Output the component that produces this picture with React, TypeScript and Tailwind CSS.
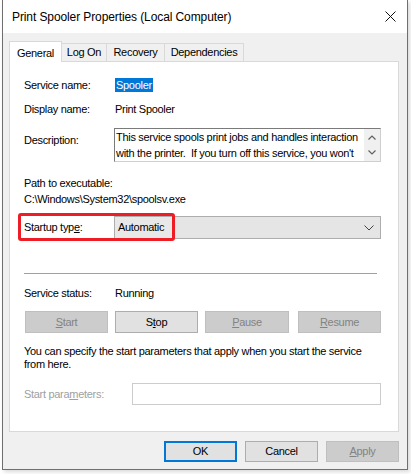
import React from "react";

const font = { fontFamily: '"Liberation Sans", Arial, sans-serif' };

function Btn({
  children,
  disabled,
  w,
  className = "",
}: {
  children: React.ReactNode;
  disabled?: boolean;
  w: string;
  className?: string;
}) {
  return (
    <div
      className={
        "flex h-[22px] items-center justify-center border text-[11px] " +
        w +
        " " +
        (disabled
          ? "border-[#bfbfbf] bg-[#cccccc] text-[#838383]"
          : "border-[#adadad] bg-[#e1e1e1] text-black") +
        " " +
        className
      }
    >
      {children}
    </div>
  );
}

export default function App() {
  return (
    <div className="relative h-[474px] w-[411px] bg-white pl-[2px] tracking-[-0.3px]" style={font}>
      <div className="flex h-[470px] w-[406px] flex-col border-x border-b border-[#6f6f6f] bg-[#f0f0f0] shadow-[2px_2px_4px_rgba(0,0,0,0.15)]">
        {/* Title bar */}
        <div className="flex h-[33px] shrink-0 items-center justify-between bg-white pl-[9px] pr-[10px]">
          <span className="text-[12px] tracking-[-0.1px] text-black">Print Spooler Properties (Local Computer)</span>
          <svg width="11" height="11" viewBox="0 0 11 11" className="mr-[1px]">
            <path d="M0.5 0.5 L10.5 10.5 M10.5 0.5 L0.5 10.5" stroke="#111" strokeWidth="1" fill="none" />
          </svg>
        </div>

        {/* Body */}
        <div className="flex flex-col pl-[6px]">
          {/* Tabs */}
          <div className="mt-[8px] flex h-[20px] items-end text-[11px]">
            <div className="relative z-10 -mb-px flex h-[21px] w-[53px] items-start justify-center border-x border-t border-[#d9d9d9] bg-white pt-[3px] text-black">
              General
            </div>
            <div className="flex h-[18px] w-[45px] items-center justify-center border-t border-r border-[#d9d9d9] text-black">
              Log On
            </div>
            <div className="flex h-[18px] w-[58px] items-center justify-center border-t border-r border-[#d9d9d9] text-black">
              Recovery
            </div>
            <div className="flex h-[18px] w-[79px] items-center justify-center border-t border-r border-[#d9d9d9] text-black">
              Dependencies
            </div>
          </div>

          {/* Panel */}
          <div className="flex h-[371px] w-[390px] flex-col border border-[#d9d9d9] bg-white pl-[14px] text-[11px] text-black">
            <div className="mt-[15px] flex h-[16px] items-center">
              <span className="w-[91px]">Service name:</span>
              <span className="bg-[#0078d7] px-[1px] leading-[14px] text-white">Spooler</span>
            </div>
            <div className="mt-[8px] flex h-[16px] items-center">
              <span className="w-[91px]">Display name:</span>
              <span>Print Spooler</span>
            </div>
            <div className="mt-[11px] flex h-[34px] items-start">
              <span className="w-[90px] pt-[4px] leading-[16px]">Description:</span>
              <div className="flex h-[34px] w-[267px] border border-[#7a7a7a] border-r-[#cfcfcf] border-b-[#cfcfcf] bg-white">
                <div className="h-[32px] flex-1 overflow-hidden whitespace-nowrap pl-[1px] leading-[16px]">
                  This service spools print jobs and handles interaction
                  <br />
                  with the printer.&nbsp; If you turn off this service, you won't
                  <br />
                  be able to print or see your printers.
                </div>
                <div className="flex w-[16px] shrink-0 flex-col items-center justify-between bg-[#f0f0f0] py-[6px]">
                  <svg width="8" height="5" viewBox="0 0 8 5">
                    <path d="M0.5 4.5 L4 1 L7.5 4.5" stroke="#606060" strokeWidth="1.2" fill="none" />
                  </svg>
                  <svg width="8" height="5" viewBox="0 0 8 5">
                    <path d="M0.5 0.5 L4 4 L7.5 0.5" stroke="#606060" strokeWidth="1.2" fill="none" />
                  </svg>
                </div>
              </div>
            </div>
            <div className="mt-[13px] flex h-[16px] items-center">Path to executable:</div>
            <div className="flex h-[16px] items-center">C:\Windows\System32\spoolsv.exe</div>

            <div className="relative mt-[9px] flex h-[23px] items-center">
              <span className="w-[90px]">
                Startup typ<span className="underline">e</span>:
              </span>
              <div className="flex h-[23px] w-[267px] items-center border border-[#adadad] bg-[#e5e5e5]">
                <div className="flex h-[21px] w-[59px] items-center border-r border-[#b4b4b4] bg-[#e8e8e8] pl-[3px]">
                  Automatic
                </div>
                <div className="flex-1" />
                <svg width="10" height="6" viewBox="0 0 10 6" className="mr-[6px]">
                  <path d="M0.5 0.5 L5 5 L9.5 0.5" stroke="#444" strokeWidth="1" fill="none" />
                </svg>
              </div>
              <div className="pointer-events-none absolute left-[-6px] top-[-3px] h-[28px] w-[157px] rounded-[3px] border-[3px] border-[#ee1c24]" />
            </div>

            <div className="mt-[34px] h-px w-[353px] bg-[#a0a0a0]" />

            <div className="mt-[11px] flex h-[16px] items-center">
              <span className="w-[91px]">Service status:</span>
              <span>Running</span>
            </div>

            <div className="mt-[10px] flex items-center pl-[1px]">
              <Btn w="w-[83px]" disabled>
                <span className="underline">S</span>tart
              </Btn>
              <Btn w="w-[83px]" className="ml-[7px]">
                S<span className="underline">t</span>op
              </Btn>
              <Btn w="w-[84px]" className="ml-[7px]" disabled>
                <span className="underline">P</span>ause
              </Btn>
              <Btn w="w-[83px]" className="ml-[9px]" disabled>
                <span className="underline">R</span>esume
              </Btn>
            </div>

            <div className="mt-[12px] w-[360px] whitespace-nowrap leading-[13px]">
              You can specify the start parameters that apply when you start the service
              <br />
              from here.
            </div>

            <div className="mt-[12px] flex h-[22px] items-center">
              <span className="w-[108px] text-[#a0a0a0]">
                Start para<span className="underline">m</span>eters:
              </span>
              <div className="h-[22px] w-[249px] border border-[#cccccc] bg-white" />
            </div>
          </div>

          {/* Bottom buttons */}
          <div className="mt-[9px] flex w-[390px] justify-end">
            <div className="flex h-[21px] w-[73px] items-center justify-center border-2 border-[#0078d7] bg-[#e1e1e1] text-[11px] text-black">
              OK
            </div>
            <div className="ml-[8px] flex h-[21px] w-[73px] items-center justify-center border border-[#adadad] bg-[#e1e1e1] text-[11px] text-black">
              Cancel
            </div>
            <div className="ml-[8px] flex h-[21px] w-[73px] items-center justify-center border border-[#bfbfbf] bg-[#cccccc] text-[11px] text-[#838383]">
              <span className="underline">A</span>pply
            </div>
          </div>
        </div>
      </div>
    </div>
  );
}
